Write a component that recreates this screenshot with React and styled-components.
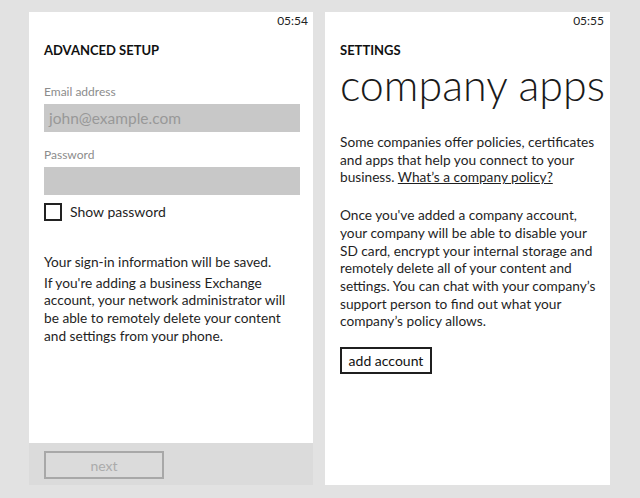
import styled, { createGlobalStyle } from "styled-components";

const GlobalStyle = createGlobalStyle`
  html, body {
    margin: 0;
    padding: 0;
    background: #e2e2e2;
  }
  body {
    font-family: "Lato", "Open Sans", sans-serif;
    color: #1f1f1f;
  }
`;

const Stage = styled.div`
  display: flex;
  gap: 12px;
  padding: 12px 0 0 29px;
  height: 498px;
  box-sizing: border-box;
`;

const Phone = styled.div`
  width: ${(p) => p.$width}px;
  display: flex;
  flex-direction: column;
`;

const Screen = styled.div`
  background: #fff;
  height: ${(p) => p.$height}px;
  padding: 0 ${(p) => p.$right}px 0 15px;
  box-sizing: border-box;
`;

const StatusBar = styled.div`
  height: 18px;
  line-height: 18px;
  font-size: 12px;
  text-align: right;
  margin-right: ${(p) => p.$shift}px;
  color: #222;
`;

const PageTitle = styled.h2`
  margin: 10px 0 0;
  font-size: 13px;
  font-weight: 700;
  line-height: 20px;
  color: #111;
`;

const Label = styled.div`
  margin-top: ${(p) => p.$top}px;
  font-size: 12px;
  line-height: 16px;
  color: #8c8c8c;
`;

const Field = styled.div`
  margin-top: 4px;
  height: 28px;
  background: #c8c8c8;
  padding-left: 5px;
  font-size: 15.5px;
  line-height: 28px;
  color: #989898;
`;

const CheckRow = styled.label`
  margin-top: 8px;
  display: flex;
  align-items: center;
  gap: 8px;
  font-size: 14px;
  line-height: 18px;
`;

const Box = styled.span`
  width: 18px;
  height: 18px;
  box-sizing: border-box;
  border: 2px solid #222;
`;

const Note = styled.p`
  margin: ${(p) => p.$top}px 0 0;
  max-width: 262px;
  font-size: 13.7px;
  line-height: 17.7px;
`;

const AppBar = styled.div`
  height: 42px;
  background: #dbdbdb;
  padding: 8px 0 0 15px;
  box-sizing: border-box;
`;

const OutlineButton = styled.button`
  display: block;
  margin-top: ${(p) => p.$top || 0}px;
  width: ${(p) => p.$width}px;
  height: ${(p) => p.$height}px;
  padding: 0;
  background: transparent;
  border: 2px solid ${(p) => (p.$disabled ? "#a8a8a8" : "#1f1f1f")};
  color: ${(p) => (p.$disabled ? "#ababab" : "#111")};
  font-family: inherit;
  font-size: 14px;
`;

const BigTitle = styled.h1`
  margin: 0;
  font-size: 43px;
  font-weight: 300;
  line-height: 50px;
  white-space: nowrap;
  color: #1a1a1a;
`;

const Link = styled.a`
  color: inherit;
  text-decoration: underline;
`;

export default function App() {
  return (
    <>
      <GlobalStyle />
      <Stage>
        <Phone $width={284}>
          <Screen $height={431} $right={13}>
            <StatusBar $shift={-8}>05:54</StatusBar>
            <PageTitle>ADVANCED SETUP</PageTitle>
            <Label $top={24}>Email address</Label>
            <Field>john@example.com</Field>
            <Label $top={15}>Password</Label>
            <Field />
            <CheckRow>
              <Box />
              Show password
            </CheckRow>
            <Note $top={32}>Your sign-in information will be saved.</Note>
            <Note $top={3}>
              If you're adding a business Exchange account, your network
              administrator will be able to remotely delete your content and
              settings from your phone.
            </Note>
          </Screen>
          <AppBar>
            <OutlineButton $disabled $width={120} $height={28}>
              next
            </OutlineButton>
          </AppBar>
        </Phone>
        <Phone $width={285}>
          <Screen $height={473} $right={4}>
            <StatusBar $shift={2}>05:55</StatusBar>
            <PageTitle>SETTINGS</PageTitle>
            <BigTitle>company apps</BigTitle>
            <Note $top={23}>
              Some companies offer policies, certificates and apps that help
              you connect to your business.{" "}
              <Link>What’s a company policy?</Link>
            </Note>
            <Note $top={20}>
              Once you've added a company account, your company will be able to
              disable your SD card, encrypt your internal storage and remotely
              delete all of your content and settings. You can chat with your
              company’s support person to find out what your company’s policy
              allows.
            </Note>
            <OutlineButton $top={17} $width={92} $height={27}>
              add account
            </OutlineButton>
          </Screen>
        </Phone>
      </Stage>
    </>
  );
}
